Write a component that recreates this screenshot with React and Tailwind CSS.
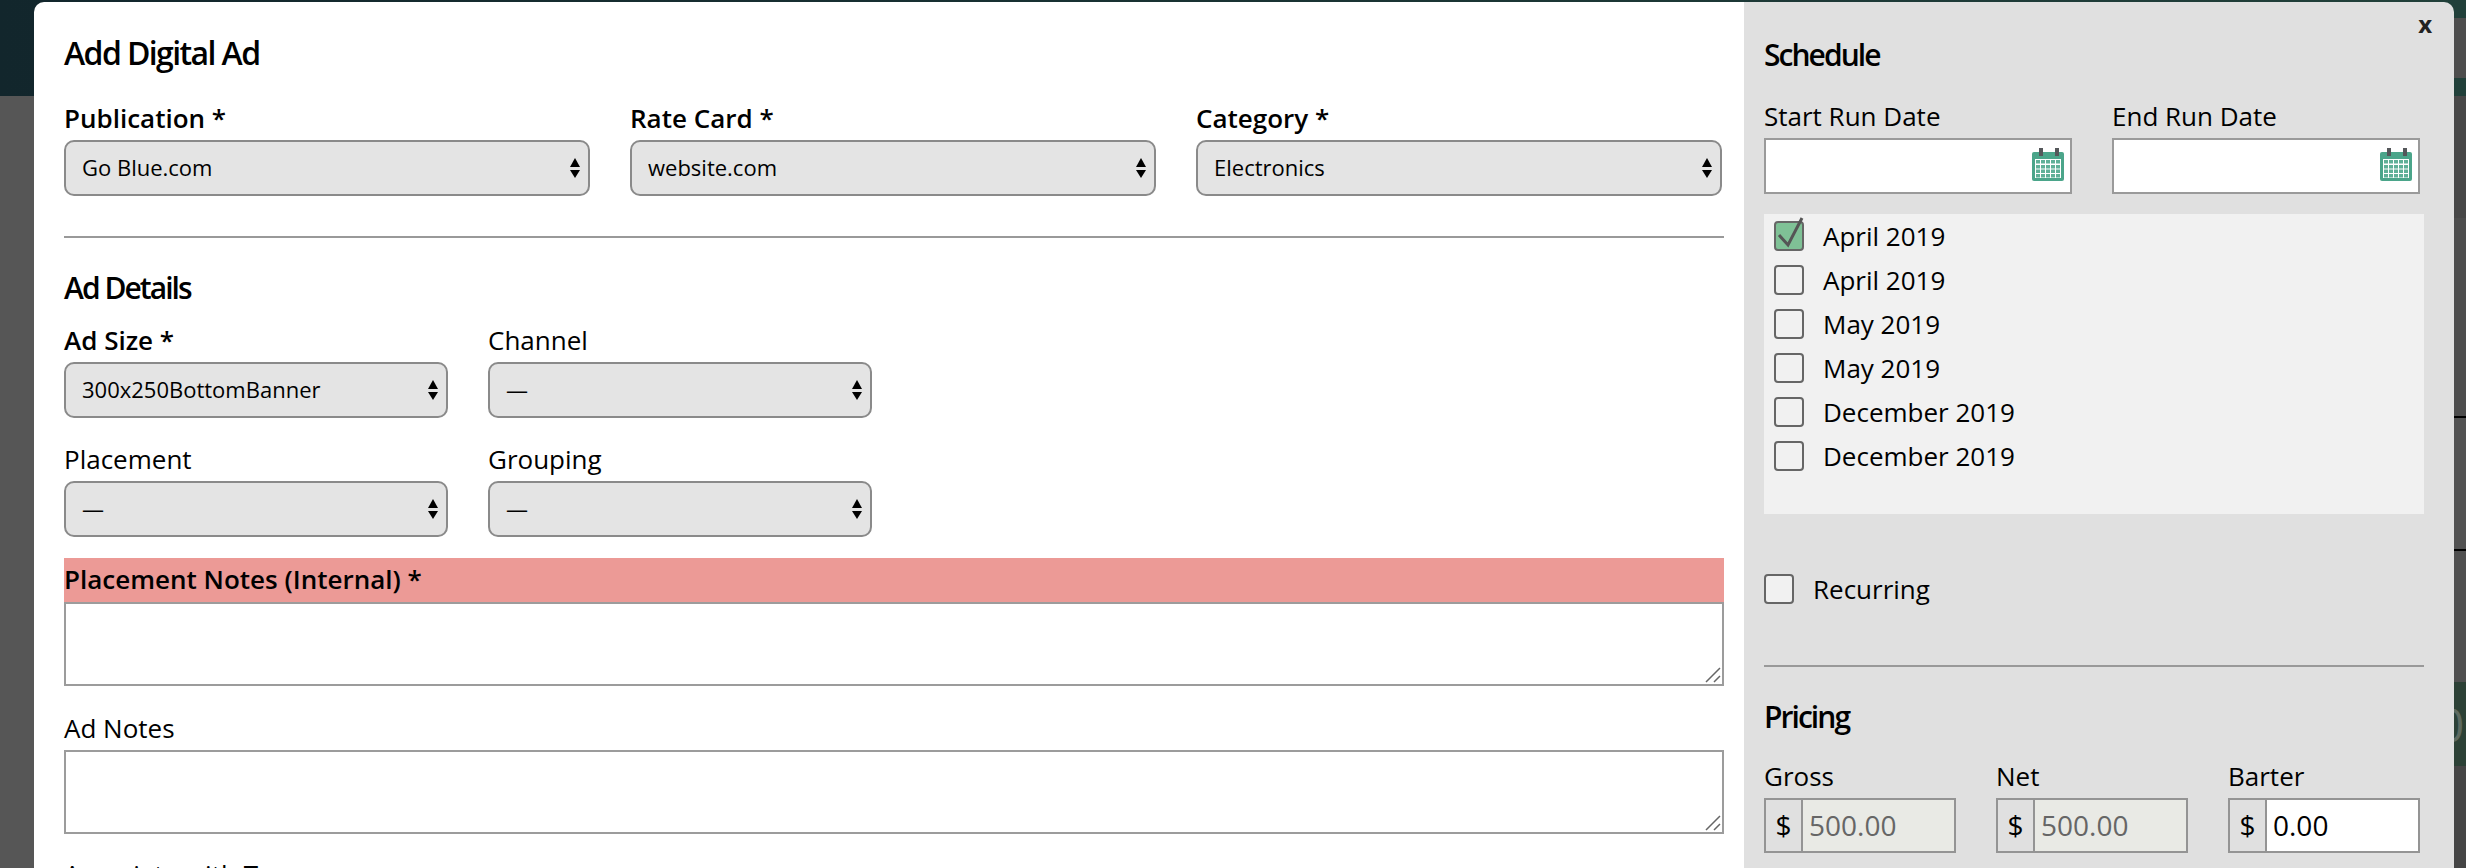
// App.jsx
const font = { fontFamily: '"Open Sans", "Liberation Sans", sans-serif' };

const months = ["April 2019", "April 2019", "May 2019", "May 2019", "December 2019", "December 2019"];

const Arrows = () => (
    <svg className="absolute right-[10px] top-[18px] pointer-events-none" width="10" height="20" viewBox="0 0 10 20">
        <path d="M5 0 L10 9 L0 9 Z" fill="#000" />
        <path d="M0 12 L10 12 L5 20 Z" fill="#000" />
    </svg>
);

const SelectBox = ({ value }) => (
    <div className="relative h-[56px]">
        <select
            defaultValue={value}
            className="block w-full h-full appearance-none rounded-[10px] border-2 border-[#8a8a8a] bg-[#e4e4e4] pl-4 pb-[2px] text-[22px] text-black outline-none"
        >
            <option>{value}</option>
        </select>
        <Arrows />
    </div>
);

const Label = ({ children, bold }) => (
    <label className={`block h-[28px] leading-[28px] mb-2 text-[26px] text-black ${bold ? "font-semibold" : ""}`}>
        {children}
    </label>
);

const Heading = ({ children }) => (
    <h2 className="h-[32px] leading-[32px] text-[30px] font-semibold tracking-[-0.065em] text-black">{children}</h2>
);

const NotesBox = ({ height }) => (
    <div className="relative">
        <textarea className={`block w-full ${height} resize-none border-2 border-[#9c9c9c] bg-white outline-none`} />
        <svg className="absolute right-[3px] bottom-[3px] pointer-events-none" width="16" height="16" viewBox="0 0 16 16">
            <path d="M1 15 L15 1 M9 15 L15 9" stroke="#666" strokeWidth="1.5" fill="none" />
        </svg>
    </div>
);

const CalendarIcon = () => (
    <svg className="absolute right-[8px] top-[10px]" width="32" height="33" viewBox="0 0 32 33">
        <path d="M2 4 H30 A2 2 0 0 1 32 6 V31 A2 2 0 0 1 30 33 H2 A2 2 0 0 1 0 31 V6 A2 2 0 0 1 2 4 Z" fill="#4ba58a" />
        <rect x="7" y="0" width="4" height="8" fill="#55575a" />
        <rect x="23" y="0" width="4" height="8" fill="#55575a" />
        <rect x="3" y="11" width="26" height="19" fill="#fff" />
        {[4, 9, 14, 19, 24].map((x) =>
            [12, 17, 21.5, 26].map((y) => (
                <rect key={`${x}-${y}`} x={x} y={y} width="4" height="3.5" fill="#5fb097" />
            ))
        )}
    </svg>
);

const DateField = ({ label }) => (
    <div>
        <Label>{label}</Label>
        <div className="relative h-[56px]">
            <input className="block w-full h-full border-2 border-[#9a9a9a] bg-white outline-none" />
            <CalendarIcon />
        </div>
    </div>
);

const MonthRow = ({ label, checked }) => (
    <div className="flex items-center h-[44px] pl-[10px]">
        <span className="relative block w-[30px] h-[30px]">
            <input
                type="checkbox"
                defaultChecked={checked}
                className={`block w-[30px] h-[30px] appearance-none rounded-[4px] border-2 border-[#666] ${checked ? "bg-[#7fc196]" : "bg-[#f1f1f1]"}`}
            />
            {checked && (
                <svg className="absolute left-0 top-0 overflow-visible pointer-events-none" width="30" height="30" viewBox="0 0 30 30">
                    <path d="M5 14 L14 24 L28 -3" stroke="#555" strokeWidth="3" fill="none" />
                </svg>
            )}
        </span>
        <span className="ml-[19px] text-[26px] text-black">{label}</span>
    </div>
);

const MoneyField = ({ label, value, disabled }) => (
    <div>
        <Label>{label}</Label>
        <div className="flex h-[55px] border-2 border-[#949494]">
            <span className="flex items-center justify-center w-[37px] shrink-0 border-r-2 border-[#949494] bg-[#e0e0e0] pb-[2px] text-[28px] text-black">$</span>
            <input
                defaultValue={value}
                disabled={disabled}
                className={`min-w-0 w-full pl-[6px] pb-[2px] text-[28px] outline-none ${disabled ? "bg-[#e9eae5] text-[#666]" : "bg-white text-black"}`}
            />
        </div>
    </div>
);

const RightStrip = () => (
    <div className="w-[12px] shrink-0 flex flex-col">
        <div className="h-[16px] bg-transparent" />
        <div className="h-[60px] bg-[#4d4d4d]" />
        <div className="h-[18px] bg-transparent" />
        <div className="h-[122px] bg-[#474747]" />
        <div className="h-[198px] bg-[#4d4d4d]" />
        <div className="h-[2px] bg-black" />
        <div className="h-[131px] bg-[#525252]" />
        <div className="h-[2px] bg-black" />
        <div className="h-[131px] bg-[#4f4f4f]" />
        <div className="h-[84px] bg-[#2c4136] overflow-hidden flex items-center">
            <span className="text-[46px] leading-none text-[#5d6a60] -ml-[16px]">0</span>
        </div>
        <div className="flex-1 bg-[#454545]" />
    </div>
);

const LeftStrip = () => (
    <div className="w-[34px] shrink-0 flex flex-col">
        <div className="h-[94px] bg-transparent" />
        <div className="flex-1 bg-[#565656]" />
    </div>
);

export default function App() {
    return (
        <div className="h-[868px] w-full overflow-hidden bg-gradient-to-r from-[#12262c] to-[#21403a] pt-[2px] flex" style={font}>
            <LeftStrip />

            <div className="relative flex-1 flex min-w-0 rounded-t-[10px] overflow-hidden">
                <main className="flex-1 min-w-0 bg-white pt-[35px] pl-[30px] pr-[20px]">
                    <h1 className="h-[32px] leading-[32px] text-[32px] font-semibold tracking-[-0.05em] text-black">Add Digital Ad</h1>

                    <div className="grid grid-cols-[526px_526px_526px] gap-x-[40px] mt-[35px]">
                        <div><Label bold>Publication *</Label><SelectBox value="Go Blue.com" /></div>
                        <div><Label bold>Rate Card *</Label><SelectBox value="website.com" /></div>
                        <div><Label bold>Category *</Label><SelectBox value="Electronics" /></div>
                    </div>

                    <hr className="mt-[40px] border-t-2 border-[#999]" />

                    <div className="mt-[34px]"><Heading>Ad Details</Heading></div>

                    <div className="grid grid-cols-[384px_384px] gap-x-[40px] mt-[22px]">
                        <div><Label bold>Ad Size *</Label><SelectBox value="300x250BottomBanner" /></div>
                        <div><Label>Channel</Label><SelectBox value="—" /></div>
                    </div>
                    <div className="grid grid-cols-[384px_384px] gap-x-[40px] mt-[27px]">
                        <div><Label>Placement</Label><SelectBox value="—" /></div>
                        <div><Label>Grouping</Label><SelectBox value="—" /></div>
                    </div>

                    <div className="mt-[21px] h-[44px] leading-[42px] bg-[#ec9a96] text-[26px] font-semibold text-black">Placement Notes (Internal) *</div>
                    <NotesBox height="h-[84px]" />

                    <div className="mt-[28px]"><Label>Ad Notes</Label></div>
                    <NotesBox height="h-[84px]" />

                    <div className="mt-[26px]"><Label>Associate with Type</Label></div>
                </main>

                <aside className="w-[710px] shrink-0 bg-[#e0e0e0] pt-[37px] pl-[20px] pr-[30px]">
                    <Heading>Schedule</Heading>

                    <div className="grid grid-cols-[308px_308px] gap-x-[40px] mt-[31px]">
                        <DateField label="Start Run Date" />
                        <DateField label="End Run Date" />
                    </div>

                    <div className="mt-[20px] h-[300px] bg-[#f1f1f1]">
                        {months.map((m, i) => (
                            <MonthRow key={i} label={m} checked={i === 0} />
                        ))}
                    </div>

                    <div className="flex items-center mt-[60px] h-[30px]">
                        <input type="checkbox" className="block w-[30px] h-[30px] appearance-none rounded-[4px] border-2 border-[#666] bg-[#f1f1f1]" />
                        <span className="ml-[19px] text-[26px] text-black">Recurring</span>
                    </div>

                    <hr className="mt-[61px] border-t-2 border-[#999]" />

                    <div className="mt-[34px]"><Heading>Pricing</Heading></div>

                    <div className="grid grid-cols-[192px_192px_192px] gap-x-[40px] mt-[29px]">
                        <MoneyField label="Gross" value="500.00" disabled />
                        <MoneyField label="Net" value="500.00" disabled />
                        <MoneyField label="Barter" value="0.00" />
                    </div>
                </aside>

                <button className="absolute right-[22px] top-[10px] text-[24px] leading-[24px] font-bold text-[#222]">x</button>
            </div>

            <RightStrip />
        </div>
    );
}
